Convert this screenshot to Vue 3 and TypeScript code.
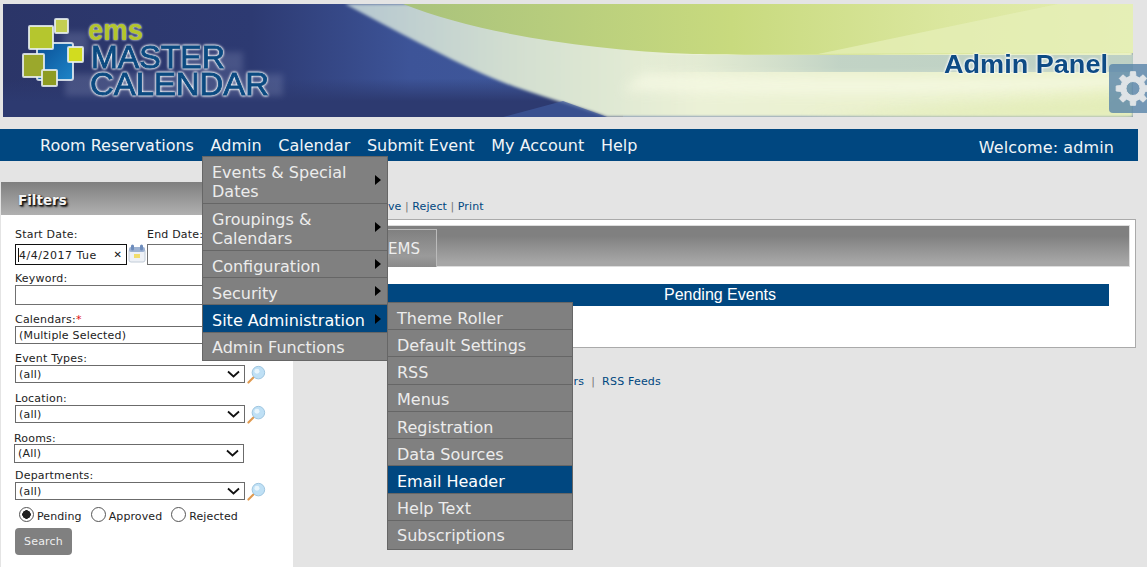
<script setup lang="ts">
const navItems: string[] = ['Room Reservations', 'Admin', 'Calendar', 'Submit Event', 'My Account', 'Help']

interface MenuItem { label: string; arrow?: boolean; active?: boolean }
const adminMenu: MenuItem[] = [
  { label: 'Events & Special Dates', arrow: true },
  { label: 'Groupings & Calendars', arrow: true },
  { label: 'Configuration', arrow: true },
  { label: 'Security', arrow: true },
  { label: 'Site Administration', arrow: true, active: true },
  { label: 'Admin Functions' },
]
const siteMenu: MenuItem[] = [
  { label: 'Theme Roller' },
  { label: 'Default Settings' },
  { label: 'RSS' },
  { label: 'Menus' },
  { label: 'Registration' },
  { label: 'Data Sources' },
  { label: 'Email Header', active: true },
  { label: 'Help Text' },
  { label: 'Subscriptions' },
]
const radios = [
  { label: 'Pending', on: true },
  { label: 'Approved', on: false },
  { label: 'Rejected', on: false },
]

function buildGear(cx: number, cy: number, outer: number, inner: number, hole: number, teeth: number): string {
  const step = (Math.PI * 2) / teeth
  const pts: string[] = []
  for (let i = 0; i < teeth; i++) {
    const a = i * step - Math.PI / 2
    const spec: [number, number][] = [
      [inner, a - step * 0.3],
      [outer, a - step * 0.19],
      [outer, a + step * 0.19],
      [inner, a + step * 0.3],
    ]
    for (const [r, t] of spec) {
      pts.push(`${(cx + r * Math.cos(t)).toFixed(2)} ${(cy + r * Math.sin(t)).toFixed(2)}`)
    }
  }
  return `M${pts.join(' L')} Z M${cx} ${cy - hole} A${hole} ${hole} 0 1 0 ${cx} ${cy + hole} A${hole} ${hole} 0 1 0 ${cx} ${cy - hole} Z`
}
const gearPath = buildGear(24, 24.5, 17, 12.5, 7, 8)
</script>

<template>
  <div class="page">
    <header class="banner">
      <svg class="banner-art" width="1130" height="113" viewBox="0 0 1130 113">
        <defs>
          <linearGradient id="navy" x1="0" y1="0" x2="1" y2="0">
            <stop offset="0" stop-color="#2b3568" />
            <stop offset="0.22" stop-color="#2d3a72" />
            <stop offset="0.36" stop-color="#3d5498" />
            <stop offset="0.55" stop-color="#3f5a9c" />
          </linearGradient>
          <linearGradient id="navyLow" x1="0" y1="0" x2="0" y2="1">
            <stop offset="0" stop-color="#2d3a70" stop-opacity="0" />
            <stop offset="0.66" stop-color="#2d3a70" stop-opacity="0" />
            <stop offset="0.86" stop-color="#2d3a70" stop-opacity="1" />
            <stop offset="1" stop-color="#2d3a70" stop-opacity="1" />
          </linearGradient>
          <linearGradient id="swoosh" x1="0" y1="0" x2="1" y2="0">
            <stop offset="0" stop-color="#b4c6d0" />
            <stop offset="0.22" stop-color="#d3dfd0" />
            <stop offset="0.45" stop-color="#ebf1d6" />
            <stop offset="1" stop-color="#e9f1c4" />
          </linearGradient>
          <linearGradient id="green" x1="0" y1="0" x2="1" y2="0">
            <stop offset="0" stop-color="#a9c27c" />
            <stop offset="0.45" stop-color="#c8da7e" />
            <stop offset="0.75" stop-color="#dbe79f" />
            <stop offset="1" stop-color="#e4edb0" />
          </linearGradient>
          <linearGradient id="band" x1="0" y1="0" x2="1" y2="0">
            <stop offset="0" stop-color="#cfdccc" stop-opacity="0" />
            <stop offset="0.4" stop-color="#bdd0c4" stop-opacity="0.9" />
            <stop offset="1" stop-color="#b9cdc4" stop-opacity="0.9" />
          </linearGradient>
          <linearGradient id="blueSquare" x1="0" y1="0" x2="1" y2="1">
            <stop offset="0" stop-color="#0a4f96" />
            <stop offset="1" stop-color="#1d85c8" />
          </linearGradient>
          <filter id="soft"><feGaussianBlur stdDeviation="1.6" /></filter>
          <filter id="wide" x="-20%" y="-50%" width="140%" height="200%"><feGaussianBlur stdDeviation="6" /></filter>
          <filter id="ghost"><feGaussianBlur stdDeviation="3" /></filter>
        </defs>
        <rect width="1130" height="113" fill="url(#navy)" />
        <rect width="620" height="113" fill="url(#navyLow)" />
        <path d="M342 0 C395 28 440 52 480 70 C515 86 560 98 604 113 L1130 113 L1130 0 Z" fill="url(#swoosh)" filter="url(#soft)" />
        <path d="M400 0 C470 28 580 46 690 50 C780 52 950 50 1130 49 L1130 0 Z" fill="url(#green)" />
        <path d="M1055 0 L815 50 L1130 48 L1130 0 Z" fill="#e6efb8" opacity="0.75" />
        <path d="M500 113 L560 97 L604 113 Z" fill="#3f5a9c" opacity="0.7" />
        <rect x="640" y="51" width="490" height="17" fill="url(#band)" />
        <path d="M640 70 C800 78 1000 74 1130 70 L1130 82 C950 92 780 92 620 86 Z" fill="#f6f9e4" opacity="0.8" filter="url(#wide)" />
        <path d="M800 113 L1130 92 L1130 113 Z" fill="#e2ecb6" opacity="0.8" filter="url(#wide)" />
        <g fill="#8d97bd" opacity="0.28" filter="url(#ghost)">
          <rect x="60" y="28" width="25" height="22" />
          <rect x="62" y="70" width="218" height="22" />
          <rect x="180" y="48" width="60" height="20" />
        </g>
        <g stroke="#e8eef2" stroke-width="2" stroke-linejoin="round" stroke-opacity="0.85">
          <rect x="34" y="39" width="36" height="37" rx="2" fill="url(#blueSquare)" />
          <rect x="26" y="22" width="24" height="23" rx="1" fill="#b5c62e" />
          <rect x="52" y="15" width="13" height="14" rx="1" fill="#c3cf52" />
          <rect x="65" y="43" width="15" height="15" rx="1" fill="#d2dc1f" />
          <rect x="20" y="50" width="21" height="23" rx="1" fill="#9ba82c" />
          <rect x="39" y="66" width="15" height="16" rx="1" fill="#8e9c22" />
        </g>
        <text class="logo-ems" x="85" y="36" textLength="55" lengthAdjust="spacingAndGlyphs">ems</text>
        <text class="logo-word" x="88" y="64" textLength="134" lengthAdjust="spacingAndGlyphs">MASTER</text>
        <text class="logo-word" x="87" y="91" textLength="179" lengthAdjust="spacingAndGlyphs">CALENDAR</text>
        <text class="panel-title" x="941" y="69" textLength="164" lengthAdjust="spacingAndGlyphs">Admin Panel</text>
      </svg>
    </header>

    <nav class="nav">
      <a v-for="item in navItems" :key="item" class="nav-link">{{ item }}</a>
      <span class="welcome">Welcome: admin</span>
    </nav>

    <div class="content">
      <aside class="sidebar">
        <h2 class="filters-title">Filters</h2>
        <form class="filters" @submit.prevent>
          <div class="date-row">
            <div class="date-col">
              <label class="lbl">Start Date:</label>
              <div class="date-line">
                <div class="date-input">
                  <i class="caret"></i>
                  <span>4/4/2017 Tue</span>
                  <span class="clear">✕</span>
                </div>
                <svg class="cal-icon" width="18" height="19" viewBox="0 0 18 19">
                  <rect x="1" y="5" width="16" height="13" rx="2" fill="#eef1f6" stroke="#c2ccd8" />
                  <rect x="1" y="3" width="16" height="5" rx="2" fill="#9db2d2" />
                  <rect x="3" y="0.5" width="3" height="6" rx="1.5" fill="#6d8cbc" />
                  <rect x="12" y="0.5" width="3" height="6" rx="1.5" fill="#6d8cbc" />
                  <rect x="6" y="10" width="6" height="4" fill="#f2dd6c" />
                </svg>
              </div>
            </div>
            <div class="date-col">
              <label class="lbl">End Date:</label>
              <div class="end-input"></div>
            </div>
          </div>

          <label class="lbl lbl-keyword">Keyword:</label>
          <div class="text-input"></div>

          <label class="lbl lbl-cal">Calendars:<em>*</em></label>
          <div class="select"><span>(Multiple Selected)</span></div>

          <label class="lbl lbl-sel">Event Types:</label>
          <div class="select-row">
            <div class="select"><span>(all)</span><svg class="chev" width="13" height="8" viewBox="0 0 13 8"><path d="M1 1.5 L6.5 6.5 L12 1.5" fill="none" stroke="#111" stroke-width="1.8" /></svg></div>
            <svg class="zoom" width="19" height="19" viewBox="0 0 20 20"><path d="M1.5 18.5 L7 13" stroke="#e09a50" stroke-width="2.2" stroke-linecap="round" /><circle cx="12" cy="8" r="6.6" fill="#bfe0f5" stroke="#9cc4de" /><circle cx="10.5" cy="6.5" r="2.6" fill="#e8f5fc" /></svg>
          </div>

          <label class="lbl lbl-sel-next">Location:</label>
          <div class="select-row">
            <div class="select"><span>(all)</span><svg class="chev" width="13" height="8" viewBox="0 0 13 8"><path d="M1 1.5 L6.5 6.5 L12 1.5" fill="none" stroke="#111" stroke-width="1.8" /></svg></div>
            <svg class="zoom" width="19" height="19" viewBox="0 0 20 20"><path d="M1.5 18.5 L7 13" stroke="#e09a50" stroke-width="2.2" stroke-linecap="round" /><circle cx="12" cy="8" r="6.6" fill="#bfe0f5" stroke="#9cc4de" /><circle cx="10.5" cy="6.5" r="2.6" fill="#e8f5fc" /></svg>
          </div>

          <label class="lbl lbl-rooms">Rooms:</label>
          <div class="select-row rooms-row">
            <div class="select"><span>(All)</span><svg class="chev" width="13" height="8" viewBox="0 0 13 8"><path d="M1 1.5 L6.5 6.5 L12 1.5" fill="none" stroke="#111" stroke-width="1.8" /></svg></div>
          </div>

          <label class="lbl lbl-dep">Departments:</label>
          <div class="select-row">
            <div class="select"><span>(all)</span><svg class="chev" width="13" height="8" viewBox="0 0 13 8"><path d="M1 1.5 L6.5 6.5 L12 1.5" fill="none" stroke="#111" stroke-width="1.8" /></svg></div>
            <svg class="zoom" width="19" height="19" viewBox="0 0 20 20"><path d="M1.5 18.5 L7 13" stroke="#e09a50" stroke-width="2.2" stroke-linecap="round" /><circle cx="12" cy="8" r="6.6" fill="#bfe0f5" stroke="#9cc4de" /><circle cx="10.5" cy="6.5" r="2.6" fill="#e8f5fc" /></svg>
          </div>

          <div class="radios">
            <label v-for="r in radios" :key="r.label" class="radio">
              <i class="dot" :class="{ on: r.on }"></i>{{ r.label }}
            </label>
          </div>
          <button class="search" type="submit">Search</button>
        </form>
      </aside>

      <main class="main">
        <div class="actions">
          <a>Approve</a><b>|</b><a>Reject</a><b>|</b><a>Print</a>
        </div>
        <section class="panel">
          <div class="tabs"><span class="tab">EMS</span></div>
          <div class="pending">Pending Events</div>
        </section>
        <div class="foot-links">
          <a>Calendars</a><b>|</b><a>RSS Feeds</a>
        </div>
      </main>
    </div>

    <ul class="menu menu-admin">
      <li v-for="m in adminMenu" :key="m.label" :class="{ active: m.active }">
        <span class="menu-text">{{ m.label }}</span>
        <i v-if="m.arrow" class="arrow"></i>
      </li>
    </ul>
    <ul class="menu menu-site">
      <li v-for="m in siteMenu" :key="m.label" :class="{ active: m.active }">
        <span class="menu-text">{{ m.label }}</span>
      </li>
    </ul>

    <div class="gear-tab">
      <svg width="38" height="49" viewBox="0 0 38 49">
        <path fill="#dfe3e6" fill-rule="evenodd" stroke="#dfe3e6" stroke-width="1" stroke-linejoin="round" :d="gearPath" />
      </svg>
    </div>
  </div>
</template>

<style>
html, body { margin: 0; background: #e4e4e4; overflow: hidden; }
</style>

<style scoped>
.page {
  position: relative;
  width: 1147px;
  height: 567px;
  overflow: hidden;
  background: #e4e4e4;
  font-family: "DejaVu Sans", Verdana, sans-serif;
}
.banner { margin: 4px 0 0 3px; width: 1130px; height: 113px; }
.banner-art { display: block; }
.logo-ems { font: bold 30px "Liberation Sans", sans-serif; fill: #b3c62a; filter: drop-shadow(0 0 1px #fff); }
.logo-word {
  font: 31px "Liberation Sans", sans-serif;
  fill: #0b4a80;
  stroke: #0b4a80;
  stroke-width: 0.8;
  filter: drop-shadow(0 0 1px #fff) drop-shadow(0 0 0.8px #fff);
}
.panel-title {
  font: bold 26px "Liberation Sans", sans-serif;
  fill: #0e4b85;
  filter: drop-shadow(0 0 1px #fff) drop-shadow(0 0 1px #fff);
}
.nav {
  display: flex;
  align-items: center;
  width: 1138px;
  height: 32px;
  margin-top: 12px;
  padding: 1px 0 0 40px;
  box-sizing: border-box;
  background: #004780;
  color: #f1f5f8;
  font-size: 16px;
}
.nav-link { margin-right: 16.7px; white-space: nowrap; }
.welcome { margin-left: auto; margin-right: 24px; padding-top: 4px; letter-spacing: 0.1px; }
.content { display: flex; margin-top: 21px; height: 385px; }
.sidebar { width: 292px; margin-left: 1px; background: #fff; flex: none; }
.filters-title {
  margin: 0;
  height: 33px;
  padding-left: 17px;
  background: linear-gradient(#7f7f7f, #b0b0b0);
  color: #f4f4f4;
  font: bold 13.5px/36px "DejaVu Sans", sans-serif;
  text-shadow: 1px 1px 2px #111, 1px 1px 1px #222, 2px 2px 2px #444;
}
.filters { padding: 13px 0 0 14px; font-size: 11px; color: #222; letter-spacing: 0.2px; }
.lbl { display: block; font-size: 11px; line-height: 13px; white-space: nowrap; }
.lbl em { color: #e01010; font-style: normal; }
.date-row { display: flex; gap: 1px; }
.date-line { display: flex; gap: 1px; margin-top: 3px; }
.date-input {
  position: relative;
  width: 112px;
  height: 21px;
  box-sizing: border-box;
  border: 1px solid #111;
  padding: 4px 3px;
  line-height: 13px;
  letter-spacing: 0.5px;
  white-space: nowrap;
}
.caret { position: absolute; left: 2px; top: 3px; width: 1px; height: 14px; background: #111; }
.clear { position: absolute; right: 4px; top: 3px; font-size: 10px; letter-spacing: 0; color: #111; }
.end-input { width: 80px; height: 21px; box-sizing: border-box; border: 1px solid #707070; margin-top: 3px; }
.lbl-keyword { margin-top: 8px; line-height: 12px; }
.text-input { width: 230px; height: 20px; box-sizing: border-box; border: 1px solid #707070; }
.lbl-cal { margin-top: 8px; }
.select {
  position: relative;
  width: 230px;
  height: 18px;
  box-sizing: border-box;
  border: 1px solid #6b6b6b;
  padding-left: 3px;
  line-height: 18px;
  background: #fff;
  white-space: nowrap;
}
.chev { position: absolute; right: 4px; top: 4px; }
.select-row { display: flex; align-items: flex-start; gap: 2px; height: 18px; }
.lbl-sel { margin-top: 8px; }
.lbl-sel-next { margin-top: 9px; }
.lbl-rooms { margin: 9px 0 -1px -1px; padding-top: 1px; line-height: 12px; }
.rooms-row { margin-left: -1px; height: 19px; }
.rooms-row .select { height: 19px; }
.lbl-dep { margin-top: 6px; }
.radios { display: flex; margin: 6px 0 0 4px; height: 22px; }
.radio { display: flex; align-items: flex-start; margin-right: 9px; line-height: 16px; padding-top: 3px; letter-spacing: 0.1px; }
.dot {
  flex: none;
  width: 15px;
  height: 15px;
  box-sizing: border-box;
  margin: -2px 3px 0 0;
  border: 1px solid #555;
  border-radius: 50%;
  background: #fff;
}
.dot.on { background: radial-gradient(circle, #222 0 4px, #fff 4.5px); }
.search {
  display: block;
  width: 57px;
  height: 27px;
  margin: 0;
  padding: 0;
  border: 0;
  border-radius: 4px;
  background: #808080;
  color: #eee;
  font: 11px "DejaVu Sans", sans-serif;
  letter-spacing: 0.2px;
}
.main { position: relative; flex: 1; padding-left: 7px; min-width: 0; }
.actions {
  margin-left: 55px;
  padding-top: 18px;
  height: 19px;
  font-size: 11px;
  line-height: 14px;
  color: #004780;
  letter-spacing: 0.1px;
  white-space: nowrap;
}
.actions b, .foot-links b { font-weight: normal; color: #777; margin: 0 3.5px; }
.panel {
  width: 836px;
  height: 129px;
  box-sizing: border-box;
  background: #fff;
  border: 1px solid #aaa;
  padding: 5px;
}
.tabs {
  height: 42px;
  box-sizing: border-box;
  border: 1px solid #ddd;
  background: linear-gradient(#808080 25%, #a6a6a6 90%);
  padding: 3px 0 0 80px;
}
.tab {
  display: block;
  width: 50px;
  height: 38px;
  box-sizing: border-box;
  border: 1px solid #bbb;
  border-bottom: 0;
  background: linear-gradient(#808080, #9a9a9a 70%, #8a8a8a);
  color: #eee;
  font-size: 15px;
  line-height: 38px;
  text-align: right;
  padding-right: 16px;
}
.pending {
  margin: 17px 21px 0 25px;
  height: 22px;
  background: #004780;
  color: #fff;
  font: 16px/22px "Liberation Sans", sans-serif;
  text-align: center;
}
.foot-links {
  width: 361px;
  margin-top: 27px;
  font-size: 11px;
  line-height: 14px;
  letter-spacing: 0.2px;
  color: #004780;
  text-align: right;
}
.foot-links b { margin: 0 7px; }
.menu {
  position: absolute;
  width: 186px;
  margin: 0;
  padding: 0;
  list-style: none;
  box-sizing: border-box;
  border: 1px solid #666;
  background: #808080;
  color: #ececec;
  font-size: 16px;
  line-height: 19px;
}
.menu-admin { left: 202px; top: 156px; padding-bottom: 1px; }
.menu-site { left: 387px; top: 302px; padding-bottom: 2px; }
.menu li {
  position: relative;
  padding: 5.6px 14px 1.65px 9px;
  border-top: 1px solid #666;
}
.menu li:first-child { border-top: 0; }
.menu-admin li:nth-child(-n + 2) { padding-bottom: 2.4px; }
.menu li.active { background: #004780; color: #fff; }
.arrow {
  position: absolute;
  right: 6px;
  top: 50%;
  margin-top: -5px;
  border-left: 6px solid #000;
  border-top: 5px solid transparent;
  border-bottom: 5px solid transparent;
}
.gear-tab {
  position: absolute;
  left: 1109px;
  top: 64px;
  width: 38px;
  height: 49px;
  display: flex;
  overflow: hidden;
  border-radius: 4px 0 0 4px;
  background: rgba(84, 130, 168, 0.78);
}
</style>
